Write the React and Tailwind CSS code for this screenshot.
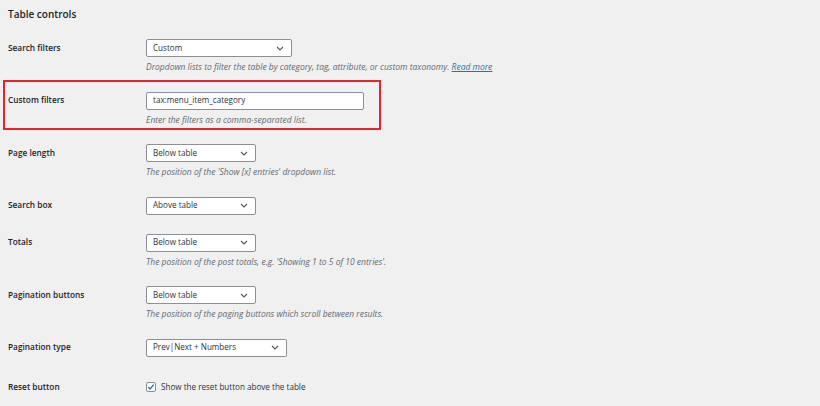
function Chevron() {
  return (
    <svg width="8" height="5" viewBox="0 0 8 5" className="shrink-0">
      <path d="M1 1l3 3 3-3" fill="none" stroke="#50575e" strokeWidth="1.1" />
    </svg>
  )
}

function Select({ value, width }) {
  return (
    <div
      className={`flex h-[18px] items-center justify-between rounded-[2px] border border-[#8c8f94] bg-white pl-[6px] pr-[7px] text-[8.1px] text-[#2c3338] ${width}`}
    >
      <span>{value}</span>
      <Chevron />
    </div>
  )
}

function Description({ children }) {
  return (
    <p className="mt-[4px] text-[8.5px] leading-[11.5px] italic text-[#646970]">
      {children}
    </p>
  )
}

function Row({ label, children, className = "py-[9.5px]" }) {
  return (
    <div className={`flex ${className}`}>
      <div className="flex h-[18px] w-[138px] shrink-0 items-center text-[8.3px] font-semibold text-[#1d2327]">
        {label}
      </div>
      <div>{children}</div>
    </div>
  )
}

export default function App() {
  return (
    <div
      className="h-[406px] w-[820px] overflow-hidden bg-[#f0f0f1] pl-[8px]"
      style={{ fontFamily: '"Open Sans", "Noto Sans", sans-serif' }}
    >
      <h2 className="pt-[6px] text-[10px] leading-[16px] font-semibold text-[#1d2327]">
        Table controls
      </h2>
      <div className="mt-[7.5px]">
        <Row label="Search filters">
          <Select value="Custom" width="w-[146px]" />
          <Description>
            Dropdown lists to filter the table by category, tag, attribute, or
            custom taxonomy.{" "}
            <span className="text-[#2271b1] underline">Read more</span>
          </Description>
        </Row>

        <div className="relative">
          <div className="pointer-events-none absolute top-[-2px] bottom-[5px] left-[-5px] w-[378px] border-2 border-[#e5232f]" />
          <Row label="Custom filters">
            <div className="flex h-[18px] w-[218px] items-center rounded-[2px] border border-[#8c8f94] bg-white px-[6px] text-[8.1px] text-[#2c3338]">
              tax:menu_item_category
            </div>
            <Description>Enter the filters as a comma-separated list.</Description>
          </Row>
        </div>

        <Row label="Page length">
          <Select value="Below table" width="w-[110px]" />
          <Description>
            The position of the 'Show [x] entries' dropdown list.
          </Description>
        </Row>

        <Row label="Search box">
          <Select value="Above table" width="w-[110px]" />
        </Row>

        <Row label="Totals">
          <Select value="Below table" width="w-[110px]" />
          <Description>
            The position of the post totals, e.g. 'Showing 1 to 5 of 10
            entries'.
          </Description>
        </Row>

        <Row label="Pagination buttons">
          <Select value="Below table" width="w-[110px]" />
          <Description>
            The position of the paging buttons which scroll between results.
          </Description>
        </Row>

        <Row label="Pagination type">
          <Select value="Prev|Next + Numbers" width="w-[141px]" />
        </Row>

        <Row label="Reset button" className="pt-[12px] pb-[9.5px]">
          <div className="flex h-[18px] items-center gap-[5px] text-[8.1px] text-[#2c3338]">
            <span className="flex h-[10px] w-[10px] items-center justify-center rounded-[2px] border border-[#8c8f94] bg-white">
              <svg width="8" height="8" viewBox="0 0 8 8">
                <path
                  d="M1.3 4.2l1.8 1.8 3.6-4.4"
                  fill="none"
                  stroke="#2271b1"
                  strokeWidth="1.4"
                />
              </svg>
            </span>
            <span>Show the reset button above the table</span>
          </div>
        </Row>
      </div>
    </div>
  )
}
